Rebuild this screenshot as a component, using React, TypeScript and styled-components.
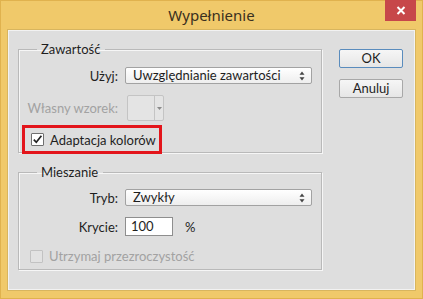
import styled, { createGlobalStyle } from "styled-components";

const GlobalStyle = createGlobalStyle`
    html, body {
        margin: 0;
        padding: 0;
        background: #f0c96a;
    }
    body {
        font-family: Lato, "Noto Sans", sans-serif;
        font-size: 13px;
        color: #1e1e1e;
        white-space: nowrap;
    }
`;

const Frame = styled.div`
    width: 423px;
    height: 299px;
    box-sizing: border-box;
    background: #f0c96a;
    border: 1px solid #e0b24e;
    display: flex;
    flex-direction: column;
`;

const TitleBar = styled.div`
    height: 29px;
    display: flex;
    align-items: center;
    justify-content: center;
    position: relative;
`;

const Title = styled.span`
    font-family: "Noto Sans", sans-serif;
    font-size: 15px;
    color: #3a3020;
    margin-top: -1px;
`;

const CloseButton = styled.div`
    position: absolute;
    top: -1px;
    right: 6px;
    width: 31px;
    height: 21px;
    background: #c7474a;
    display: flex;
    align-items: center;
    justify-content: center;
`;

const Panel = styled.div`
    margin: 0 7px 8px 7px;
    flex: 1;
    background: #dedede;
    border: 1px solid #f2f2f2;
    box-shadow: 0 0 0 1px #d8b55e;
    display: flex;
    padding: 10px 0 0 9px;
    gap: 17px;
`;

const LeftColumn = styled.div`
    width: 304px;
    display: flex;
    flex-direction: column;
    gap: 11px;
`;

const RightColumn = styled.div`
    display: flex;
    flex-direction: column;
    gap: 11px;
    padding-top: 8px;
`;

const Group = styled.fieldset<{ $height: number }>`
    margin: 0;
    padding: 0;
    height: ${(p) => p.$height}px;
    box-sizing: border-box;
    border: 1px solid #b9b9b9;
    box-shadow: inset 1px 1px 0 #f6f6f6, 1px 1px 0 #f6f6f6;
    display: flex;
    flex-direction: column;
`;

const Legend = styled.legend`
    margin-left: 18px;
    padding: 0 5px 0 4px;
    font-size: 13px;
    line-height: 16px;
    color: #1e1e1e;
`;

const Row = styled.div<{ $top: number }>`
    display: flex;
    align-items: center;
    margin-top: ${(p) => p.$top}px;
    gap: 7px;
`;

const Label = styled.span<{ $disabled?: boolean }>`
    width: 99px;
    text-align: right;
    color: ${(p) => (p.$disabled ? "#a2a2a2" : "#1e1e1e")};
`;

const Select = styled.div<{ $width: number }>`
    width: ${(p) => p.$width}px;
    height: 17px;
    box-sizing: border-box;
    border: 1px solid #a2a2a2;
    border-radius: 2px;
    background: linear-gradient(#ffffff, #eeeeee);
    display: flex;
    align-items: center;
    justify-content: space-between;
    padding: 0 6px 0 7px;
    line-height: 15px;
`;

const Swatch = styled.div`
    display: flex;
    height: 24px;
    border: 1px solid #c4c4c4;
    border-radius: 2px;
    background: #e4e4e4;
    margin-left: 2px;
`;

const SwatchBox = styled.div`
    width: 26px;
    border-right: 1px solid #c4c4c4;
`;

const SwatchArrow = styled.div`
    width: 8px;
    display: flex;
    align-items: center;
    justify-content: center;
`;

const Input = styled.div`
    width: 48px;
    height: 19px;
    box-sizing: border-box;
    border: 1px solid #8e8e8e;
    background: #fff;
    padding-left: 5px;
    line-height: 17px;
`;

const Percent = styled.span`
    margin-left: 5px;
`;

const Highlight = styled.div`
    margin-left: 3px;
    width: 140px;
    height: 29px;
    box-sizing: border-box;
    border: 3px solid #e3151b;
    display: flex;
    align-items: center;
    padding-left: 6px;
    gap: 6px;
`;

const CheckRow = styled.div`
    display: flex;
    align-items: center;
    gap: 6px;
    margin-left: 11px;
`;

const Checkbox = styled.div<{ $disabled?: boolean }>`
    width: 13px;
    height: 13px;
    box-sizing: border-box;
    border: 1px solid ${(p) => (p.$disabled ? "#c2c2c2" : "#6f6f6f")};
    border-radius: 1px;
    background: ${(p) => (p.$disabled ? "#e2e2e2" : "#fff")};
    display: flex;
    align-items: center;
    justify-content: center;
`;

const CheckText = styled.span<{ $disabled?: boolean }>`
    color: ${(p) => (p.$disabled ? "#a2a2a2" : "#1e1e1e")};
`;

const Button = styled.div<{ $default?: boolean }>`
    width: 64px;
    height: 19px;
    box-sizing: border-box;
    border: 1px solid ${(p) => (p.$default ? "#5a8cbd" : "#a8a8a8")};
    border-radius: 2px;
    background: linear-gradient(#f6f6f6, #e6e6e6);
    display: flex;
    align-items: center;
    justify-content: center;
    line-height: 15px;
`;

const UpDown = () => (
    <svg width="6" height="10" viewBox="0 0 6 10">
        <path d="M3 0.5 L5.5 3.8 H0.5 Z" fill="#444" />
        <path d="M3 9.5 L5.5 6.2 H0.5 Z" fill="#444" />
    </svg>
);

export default function App() {
    return (
        <>
            <GlobalStyle />
            <Frame>
                <TitleBar>
                    <Title>Wypełnienie</Title>
                    <CloseButton>
                        <svg width="10" height="9" viewBox="0 0 10 9">
                            <path d="M1.5 1 L8.5 8 M8.5 1 L1.5 8" stroke="#fff" strokeWidth="2" />
                        </svg>
                    </CloseButton>
                </TitleBar>
                <Panel>
                    <LeftColumn>
                        <Group $height={112}>
                            <Legend>Zawartość</Legend>
                            <Row $top={10}>
                                <Label>Użyj:</Label>
                                <Select $width={187}>
                                    Uwzględnianie zawartości
                                    <UpDown />
                                </Select>
                            </Row>
                            <Row $top={11}>
                                <Label $disabled>Własny wzorek:</Label>
                                <Swatch>
                                    <SwatchBox />
                                    <SwatchArrow>
                                        <svg width="5" height="3" viewBox="0 0 5 3">
                                            <path d="M0 0 H5 L2.5 3 Z" fill="#8a8a8a" />
                                        </svg>
                                    </SwatchArrow>
                                </Swatch>
                            </Row>
                            <Row $top={4}>
                                <Highlight>
                                    <Checkbox>
                                        <svg width="11" height="11" viewBox="0 0 11 11">
                                            <path d="M1.8 5.6 L4.3 8.3 L9.4 1.8" fill="none" stroke="#222" strokeWidth="1.7" />
                                        </svg>
                                    </Checkbox>
                                    <CheckText>Adaptacja kolorów</CheckText>
                                </Highlight>
                            </Row>
                        </Group>
                        <Group $height={106}>
                            <Legend>Mieszanie</Legend>
                            <Row $top={9}>
                                <Label>Tryb:</Label>
                                <Select $width={187}>
                                    Zwykły
                                    <UpDown />
                                </Select>
                            </Row>
                            <Row $top={11}>
                                <Label>Krycie:</Label>
                                <Input>100</Input>
                                <Percent>%</Percent>
                            </Row>
                            <Row $top={12}>
                                <CheckRow>
                                    <Checkbox $disabled />
                                    <CheckText $disabled>Utrzymaj przezroczystość</CheckText>
                                </CheckRow>
                            </Row>
                        </Group>
                    </LeftColumn>
                    <RightColumn>
                        <Button $default>OK</Button>
                        <Button>Anuluj</Button>
                    </RightColumn>
                </Panel>
            </Frame>
        </>
    );
}
